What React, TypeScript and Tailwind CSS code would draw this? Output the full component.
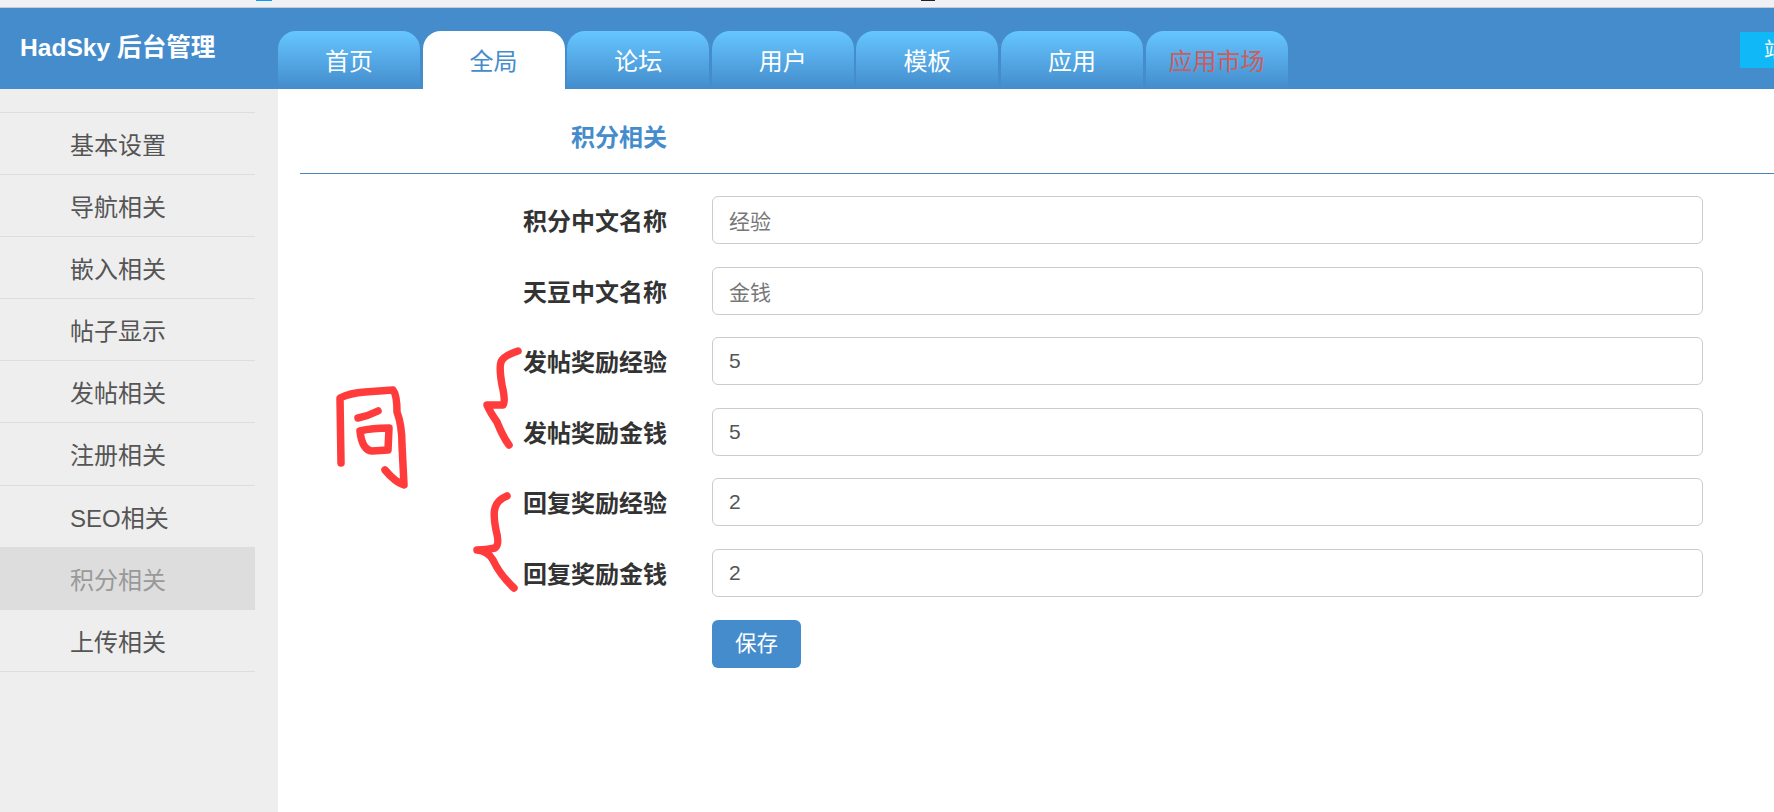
const cjk = "font-['Helvetica_Neue','Liberation_Sans','Noto_Sans_CJK_SC',sans-serif]";

const tabs = [
  { label: '首页' },
  { label: '全局', active: true },
  { label: '论坛' },
  { label: '用户' },
  { label: '模板' },
  { label: '应用' },
  { label: '应用市场', red: true },
];

const menu = ['基本设置', '导航相关', '嵌入相关', '帖子显示', '发帖相关', '注册相关', 'SEO相关', '积分相关', '上传相关'];

const fields = [
  { label: '积分中文名称', value: '经验', hint: true },
  { label: '天豆中文名称', value: '金钱', hint: true },
  { label: '发帖奖励经验', value: '5' },
  { label: '发帖奖励金钱', value: '5' },
  { label: '回复奖励经验', value: '2' },
  { label: '回复奖励金钱', value: '2' },
];

export default function App() {
  return (
    <div className={`${cjk} relative flex h-[812px] w-[1774px] flex-col overflow-hidden bg-white`}>
      {/* browser strip */}
      <div className="relative h-2 shrink-0 border-b border-[#c8ccd0] bg-[#f0f1f5]">
        <div className="absolute top-0 left-[256px] h-px w-4 bg-[#0a9cf5]" />
        <div className="absolute top-0 left-[921px] h-px w-[14px] bg-[#222222]" />
      </div>

      {/* Header */}
      <div className="flex h-[81px] shrink-0 bg-[#448ccc]">
        <div className="w-[278px] shrink-0 pl-5 pt-[22px] text-[24.6px] leading-9 font-bold text-white">HadSky 后台管理</div>
        <div className="flex flex-1 items-end gap-[2.6px] overflow-hidden">
          {tabs.map((tab) => (
            <div
              key={tab.label}
              className={`flex h-[58px] w-[142px] items-center justify-center rounded-t-[18px] pt-1 text-2xl ${
                tab.active
                  ? 'bg-white text-[#448ccc]'
                  : tab.red
                    ? 'bg-gradient-to-b from-[#66c6ff] to-[#448ccc] text-[#cd5c5c]'
                    : 'bg-gradient-to-b from-[#66c6ff] to-[#448ccc] text-white'
              }`}
            >
              {tab.label}
            </div>
          ))}
        </div>
        <div className="mt-6 h-9 w-[34px] shrink-0 overflow-hidden bg-[#10b8f8] pl-6 text-[21px] leading-9 whitespace-nowrap text-white">站</div>
      </div>

      <div className="flex flex-1">
        {/* Sidebar */}
        <div className="w-[278px] shrink-0 bg-[#eeeeee] pt-[23px]">
          <div className="w-[255px] border-t border-[#dddddd]">
            {menu.map((item) => (
              <div
                key={item}
                className={`h-[62.1px] border-b border-[#dddddd] pl-[70px] text-2xl leading-[66px] ${
                  item === '积分相关' ? 'bg-[#dddddd] text-[#999999]' : 'text-[#555555]'
                }`}
              >
                {item}
              </div>
            ))}
          </div>
        </div>

        {/* Main */}
        <div className="flex-1 pl-[22px]">
          <div className="flex h-[85px] items-start border-b border-[#4d85b8] pt-[31px]">
            <div className="w-[367px] text-right text-2xl leading-9 font-bold text-[#448ccc]">积分相关</div>
          </div>
          <div className="flex flex-col gap-[22.6px] pt-[22px]">
            {fields.map((field) => (
              <div key={field.label} className="flex items-center">
                <div className="w-[367px] pt-1 text-right text-2xl font-bold text-[#333333]">{field.label}</div>
                <input
                  readOnly
                  value={field.value}
                  className={`ml-[45px] h-12 w-[991px] rounded-md border border-[#cccccc] bg-white px-4 text-[21px] outline-none ${
                    field.hint ? 'text-[#777777]' : 'text-[#555555]'
                  }`}
                />
              </div>
            ))}
            <div className="ml-[412px]">
              <button className="h-12 w-[89px] rounded-md bg-[#448ccc] pt-0.5 text-[21.5px] text-white">保存</button>
            </div>
          </div>
        </div>
      </div>

      {/* Red pen marks drawn over the page */}
      <svg className="absolute top-0 left-0" width="1774" height="812" viewBox="0 0 1774 812" fill="none" stroke="#ff3b3b" strokeWidth="7.5" strokeLinecap="round" strokeLinejoin="round">
        <path d="M341 463 L340 398 Q350 393 365 392 L393 390 Q397 395 397 412 Q402 425 402 445 L404 485 Q395 482 385 470" />
        <path d="M358 418 Q368 416 378 411" />
        <path d="M360 431 Q362 450 372 451 L388 450 L389 428 Q372 428 360 431" />
        <path d="M518 351 Q503 356 501 362 Q499 368 502 385 Q506 402 503 405 Q495 405 487 405 Q490 412 497 422 Q503 437 509 445" />
        <path d="M507 496 Q497 500 495 508 Q493 515 496 530 Q500 545 495 548 Q486 550 477 550 Q488 551 493 560 Q500 575 514 588" />
      </svg>
    </div>
  );
}
